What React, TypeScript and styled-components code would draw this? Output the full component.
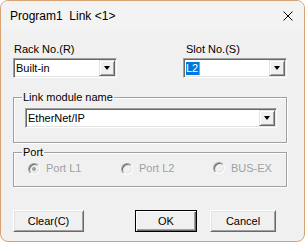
import styled, { createGlobalStyle } from "styled-components"

const GlobalStyle = createGlobalStyle`
  html, body {
    margin: 0;
    padding: 0;
    background: #fff;
  }
  body {
    font-family: "Liberation Sans", Arial, sans-serif;
    color: #000;
  }
`

const Window = styled.div`
  box-sizing: border-box;
  width: 305px;
  height: 242px;
  border: 1px solid #d9a273;
  border-radius: 8px;
  background: #f0f0f0;
  overflow: hidden;
  display: flex;
  flex-direction: column;
`

const TitleBar = styled.div`
  height: 30px;
  flex: none;
  display: flex;
  align-items: center;
  justify-content: space-between;
  padding: 0 11px 0 9px;
  background: #f3f3f3;
  font-size: 12px;
  white-space: pre;
`

const Body = styled.div`
  padding: 12px 17px 0 12px;
  font-size: 11px;
  line-height: 13px;
`

const TopRow = styled.div`
  display: grid;
  grid-template-columns: 104px 104px;
  justify-content: space-between;
`

const Label = styled.div<{ $indent?: boolean }>`
  height: 13px;
  margin-bottom: 2px;
  padding-left: ${p => (p.$indent ? 3 : 1)}px;
`

const Combo = styled.div<{ $inset?: number }>`
  box-sizing: border-box;
  height: 20px;
  margin-left: ${p => p.$inset ?? 0}px;
  display: flex;
  align-items: stretch;
  background: #fff;
  border: 1px solid;
  border-color: #a0a0a0 #fff #fff #a0a0a0;
  box-shadow: inset 1px 1px 0 #696969, inset -1px -1px 0 #e3e3e3;
  padding: 1px;
`

const ComboText = styled.div`
  flex: 1;
  display: flex;
  align-items: center;
  padding-left: 1px;
  white-space: nowrap;
`

const Selected = styled.span`
  background: #0078d7;
  color: #fff;
  padding: 0 1px 0 0;
  border-right: 1px solid #ff8728;
  line-height: 13px;
`

const ArrowButton = styled.div`
  box-sizing: border-box;
  width: 16px;
  flex: none;
  display: flex;
  align-items: center;
  justify-content: center;
  background: #f0f0f0;
  border: 1px solid;
  border-color: #e3e3e3 #696969 #696969 #e3e3e3;
  box-shadow: inset 1px 1px 0 #fff, inset -1px -1px 0 #a0a0a0;
`

const Arrow = styled.span`
  width: 0;
  height: 0;
  border-left: 3.5px solid transparent;
  border-right: 3.5px solid transparent;
  border-top: 4px solid #000;
`

const Group = styled.fieldset<{ $gap: number; $pad: string }>`
  margin: ${p => p.$gap}px 0 0;
  padding: ${p => p.$pad};
  min-width: 0;
  border: 1px solid #a0a0a0;
  box-shadow: inset 1px 1px 0 #fff, 1px 1px 0 #fff;
`

const Legend = styled.legend`
  padding: 0 1px;
  font-size: 11px;
  line-height: 13px;
  height: 13px;
`

const RadioRow = styled.div`
  display: grid;
  grid-template-columns: 93px 92px auto;
  padding-left: 6px;
  height: 13px;
`

const RadioItem = styled.label<{ $lift?: boolean }>`
  display: flex;
  align-items: center;
  gap: 6px;
  color: #a0a0a0;
  margin-top: ${p => (p.$lift ? -1 : 0)}px;
`

const RadioDot = styled.span<{ $checked?: boolean }>`
  box-sizing: border-box;
  width: 12px;
  height: 12px;
  flex: none;
  border-radius: 50%;
  border: 1px solid;
  border-color: #a0a0a0 #fff #fff #a0a0a0;
  box-shadow: inset 1px 1px 0 #696969, inset -1px -1px 0 #e3e3e3;
  background: #f0f0f0;
  display: flex;
  align-items: center;
  justify-content: center;

  &::after {
    content: "";
    width: 4px;
    height: 4px;
    border-radius: 50%;
    background: ${p => (p.$checked ? "#a0a0a0" : "transparent")};
  }
`

const ButtonRow = styled.div`
  display: flex;
  align-items: center;
  margin-top: 23px;
  padding-right: 11px;
`

const Spacer = styled.div`
  flex: 1;
`

const Button = styled.button<{ $width: number; $default?: boolean }>`
  box-sizing: border-box;
  width: ${p => p.$width}px;
  height: 22px;
  padding: 0;
  margin-left: ${p => (p.$default ? 0 : 13)}px;
  font-family: "Liberation Sans", Arial, sans-serif;
  font-size: 11px;
  color: #000;
  background: #f0f0f0;
  border: 1px solid;
  border-color: ${p => (p.$default ? "#000" : "#fff #696969 #696969 #fff")};
  box-shadow: ${p =>
    p.$default
      ? "inset 1px 1px 0 #fff, inset -1px -1px 0 #696969, inset -2px -2px 0 #a0a0a0"
      : "inset 1px 1px 0 #e3e3e3, inset -1px -1px 0 #a0a0a0"};

  &:first-child {
    margin-left: 0;
  }
`

function Select({ value, selected, inset }: { value: string; selected?: boolean; inset?: number }) {
  return (
    <Combo $inset={inset}>
      <ComboText>{selected ? <Selected>{value}</Selected> : value}</ComboText>
      <ArrowButton>
        <Arrow />
      </ArrowButton>
    </Combo>
  )
}

export default function App() {
  const ports = [
    { label: "Port L1", checked: true },
    { label: "Port L2" },
    { label: "BUS-EX", lift: true },
  ]

  return (
    <>
      <GlobalStyle />
      <Window>
        <TitleBar>
          <span>Program1  Link &lt;1&gt;</span>
          <svg width="10" height="10" viewBox="0 0 10 10">
            <path d="M0.5 0.5L9.5 9.5M9.5 0.5L0.5 9.5" stroke="#000" strokeWidth="1" />
          </svg>
        </TitleBar>

        <Body>
          <TopRow>
            <div>
              <Label>Rack No.(R)</Label>
              <Select value="Built-in" />
            </div>
            <div>
              <Label $indent>Slot No.(S)</Label>
              <Select value="L2" selected />
            </div>
          </TopRow>

          <Group $gap={13} $pad="4px 9px 14px 8px">
            <Legend>Link module name</Legend>
            <Select value="EtherNet/IP" inset={3} />
          </Group>

          <Group $gap={3} $pad="3px 9px 11px 8px">
            <Legend>Port</Legend>
            <RadioRow>
              {ports.map(p => (
                <RadioItem key={p.label} $lift={p.lift}>
                  <RadioDot $checked={p.checked} />
                  {p.label}
                </RadioItem>
              ))}
            </RadioRow>
          </Group>

          <ButtonRow>
            <Button $width={71}>Clear(C)</Button>
            <Spacer />
            <Button $width={62} $default>OK</Button>
            <Button $width={66}>Cancel</Button>
          </ButtonRow>
        </Body>
      </Window>
    </>
  )
}
